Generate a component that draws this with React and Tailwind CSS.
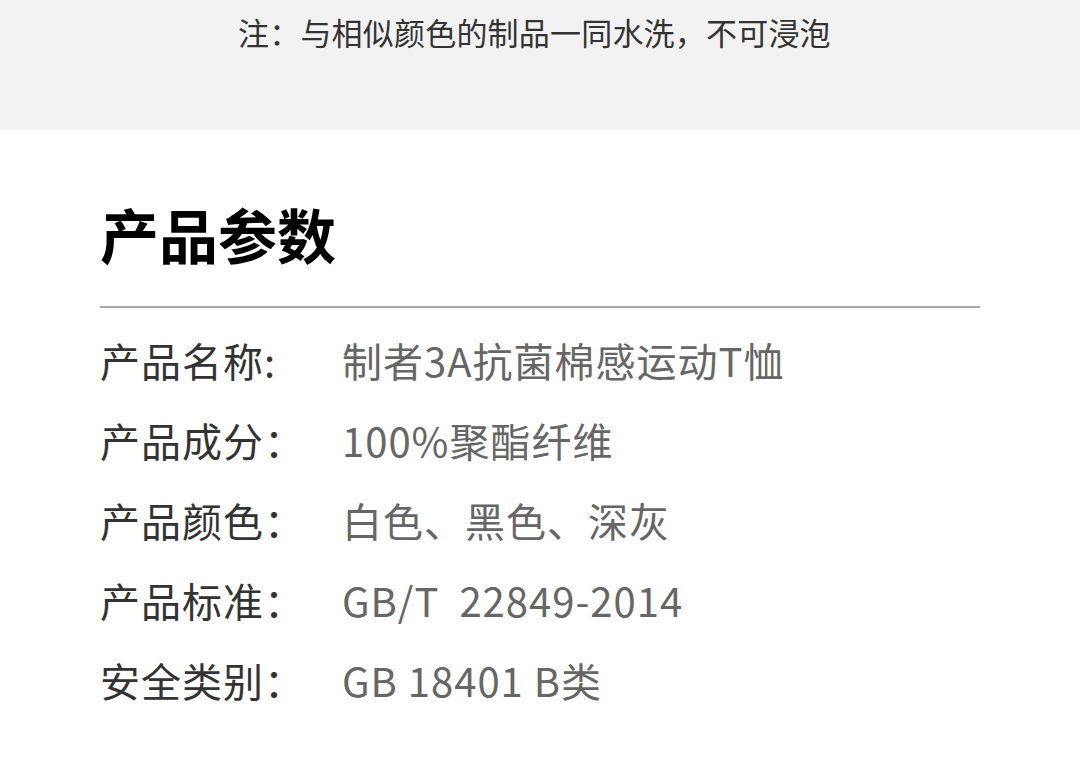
import React from 'react';

const specs = [
  { label: '产品名称:', value: '制者3A抗菌棉感运动T恤' },
  { label: '产品成分：', value: '100%聚酯纤维' },
  { label: '产品颜色：', value: '白色、黑色、深灰' },
  { label: '产品标准：', value: 'GB/T\u00a0\u00a022849-2014' },
  { label: '安全类别：', value: 'GB 18401 B类' },
];

export default function App() {
  return (
    <div
      className="w-[1080px] h-[758px] bg-white overflow-hidden"
      style={{ fontFamily: '"Noto Sans CJK SC", "Noto Sans", sans-serif' }}
    >
      {/* Care note band */}
      <div className="h-[130px] bg-[#f2f2f2] pt-[13px] pl-[238px]">
        <p className="text-[31px] leading-[38px] tracking-[0.2px] text-[#333333]">
          注：与相似颜色的制品一同水洗，不可浸泡
        </p>
      </div>

      {/* Product parameters */}
      <div className="px-[100px] pt-[75px]">
        <h2 className="text-[59px] leading-[58px] font-bold text-black">产品参数</h2>
        <div className="mt-[43px] h-[2px] bg-[#aaaaaa]" />
        <div className="mt-[12px]">
          {specs.map((row) => (
            <div key={row.label} className="flex h-[80px] items-center text-[40px] tracking-[1px]">
              <span className="w-[242px] shrink-0 text-[#333333]">{row.label}</span>
              <span className="text-[#666666]">{row.value}</span>
            </div>
          ))}
        </div>
      </div>
    </div>
  );
}
